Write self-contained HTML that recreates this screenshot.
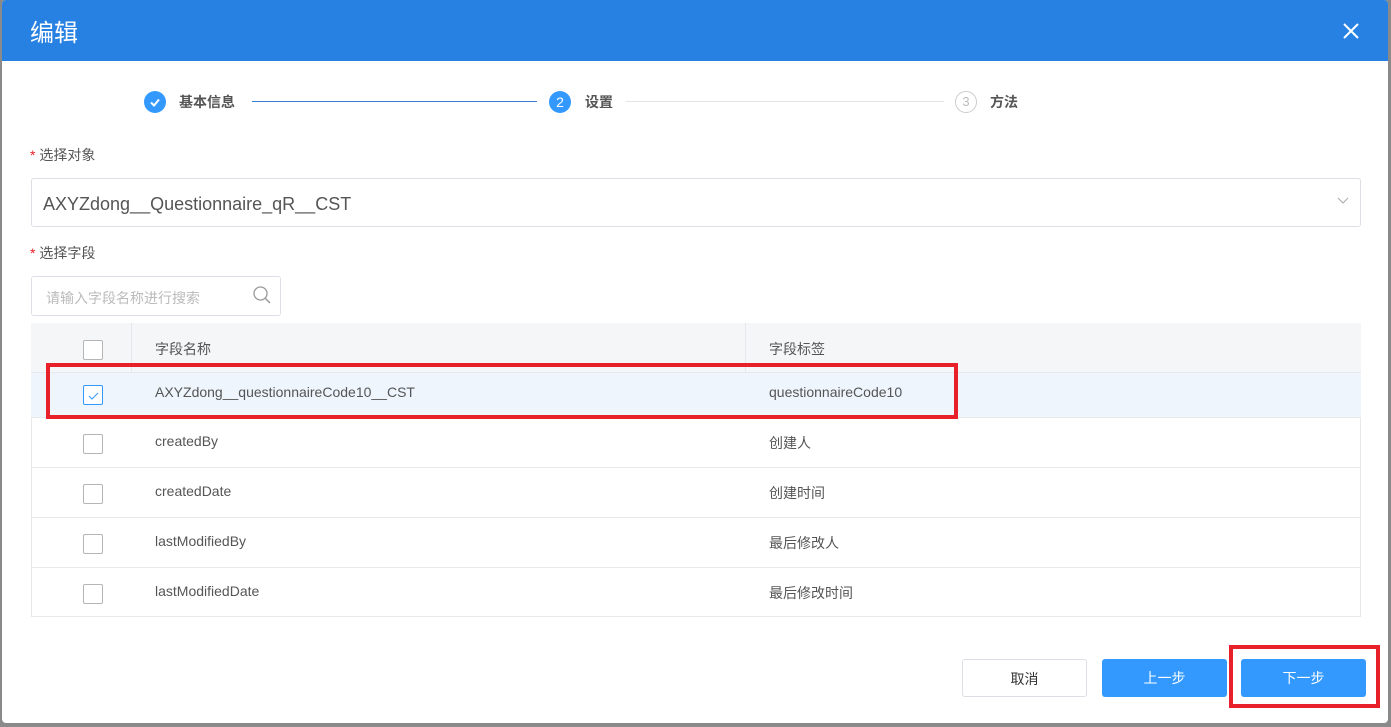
<!DOCTYPE html>
<html><head><meta charset="utf-8"><style>
*{margin:0;padding:0;box-sizing:border-box}
body{width:1391px;height:727px;background:#8a8a8a;position:relative;overflow:hidden;font-family:"Liberation Sans","Noto Sans CJK SC",sans-serif;color:#555}
.modal{position:absolute;left:2px;top:0;width:1386px;height:723px;background:#fff;border-radius:4px;overflow:hidden}
.hd{height:61px;background:#2781e2;color:#fff;font-size:24px;padding:13px 0 0 28px}
.abs{position:absolute}
.chk{position:absolute;width:20px;height:20px;border:1px solid #b5b5b5;border-radius:2px;background:#fff}
.row{position:absolute;left:29px;width:1330px;border-bottom:1px solid #e6e8eb;font-size:14px;color:#555}
.btn{position:absolute;top:659px;width:125px;height:38px;border-radius:3px;font-size:14px;text-align:center;line-height:38px}
.red{position:absolute;border:4px solid #e8202a}
</style></head><body>
<div class="modal">
<div class="hd">编辑</div>
<svg class="abs" style="left:1340px;top:22px" width="18" height="18"><path d="M2 2L16 16M16 2L2 16" stroke="#fff" stroke-width="2"/></svg>
<div class="abs" style="left:142px;top:91px;width:22px;height:22px;border-radius:50%;background:#3399ff"></div>
<svg class="abs" style="left:142px;top:91px" width="22" height="22"><path d="M7 11.5l3 3 5-6" stroke="#fff" stroke-width="2" fill="none"/></svg>
<div class="abs" style="left:177px;top:92px;font-size:14px;font-weight:bold;color:#555">基本信息</div>
<div class="abs" style="left:250px;top:101px;width:285px;height:1px;background:#3a7fd6"></div>
<div class="abs" style="left:547px;top:91px;width:22px;height:22px;border-radius:50%;background:#3399ff;color:#fff;font-size:14px;text-align:center;line-height:22px">2</div>
<div class="abs" style="left:583px;top:92px;font-size:14px;font-weight:bold;color:#555">设置</div>
<div class="abs" style="left:624px;top:101px;width:318px;height:1px;background:#e4e4e4"></div>
<div class="abs" style="left:953px;top:91px;width:22px;height:22px;border-radius:50%;border:1px solid #ccc;color:#bbb;font-size:13px;text-align:center;line-height:20px">3</div>
<div class="abs" style="left:988px;top:92px;font-size:14px;font-weight:bold;color:#555">方法</div>
<div class="abs" style="left:28px;top:145px;font-size:14px;color:#555"><span style="color:#e8202a">*</span> 选择对象</div>
<div class="abs" style="left:29px;top:178px;width:1330px;height:49px;border:1px solid #dcdfe6;border-radius:3px;font-size:18px;color:#555;padding:15px 0 0 11px">AXYZdong__Questionnaire_qR__CST</div>
<svg class="abs" style="left:1335px;top:197px" width="12" height="8"><path d="M1 1l5 5 5-5" stroke="#aaa" fill="none"/></svg>
<div class="abs" style="left:28px;top:243px;font-size:14px;color:#555"><span style="color:#e8202a">*</span> 选择字段</div>
<div class="abs" style="left:29px;top:276px;width:250px;height:40px;border:1px solid #dcdfe6;border-radius:3px;font-size:14px;color:#bbb;padding:11px 0 0 14px">请输入字段名称进行搜索</div>
<svg class="abs" style="left:250px;top:285px" width="20" height="20"><circle cx="8.5" cy="8.5" r="6.5" stroke="#999" stroke-width="1.3" fill="none"/><path d="M13.5 13.5L18 18" stroke="#999" stroke-width="1.5"/></svg>
<div class="abs" style="left:29px;top:323px;width:1330px;height:294px;border:1px solid #e6e8eb"></div>
<div class="row" style="top:323px;height:50px;background:#f5f6f8">
<div class="abs" style="left:100px;top:0;width:1px;height:49px;background:#e6e8eb"></div>
<div class="abs" style="left:714px;top:0;width:1px;height:49px;background:#e6e8eb"></div>
<div class="chk" style="left:52px;top:17px"></div>
<div class="abs" style="left:124px;top:16px">字段名称</div><div class="abs" style="left:738px;top:16px">字段标签</div></div>
<div class="row" style="top:373px;height:45px;background:#eef5fd">
<div class="chk" style="left:52px;top:12px;border-color:#3399ff"></div>
<svg class="abs" style="left:57px;top:18px" width="12" height="10"><path d="M1 5l3 3 6-6" stroke="#3399ff" fill="none"/></svg>
<div class="abs" style="left:124px;top:11px">AXYZdong__questionnaireCode10__CST</div><div class="abs" style="left:738px;top:11px">questionnaireCode10</div></div>
<div class="row" style="top:418px;height:50px"><div class="chk" style="left:52px;top:16px"></div><div class="abs" style="left:124px;top:15px">createdBy</div><div class="abs" style="left:738px;top:15px">创建人</div></div>
<div class="row" style="top:468px;height:50px"><div class="chk" style="left:52px;top:16px"></div><div class="abs" style="left:124px;top:15px">createdDate</div><div class="abs" style="left:738px;top:15px">创建时间</div></div>
<div class="row" style="top:518px;height:50px"><div class="chk" style="left:52px;top:16px"></div><div class="abs" style="left:124px;top:15px">lastModifiedBy</div><div class="abs" style="left:738px;top:15px">最后修改人</div></div>
<div class="row" style="top:568px;height:49px"><div class="chk" style="left:52px;top:16px"></div><div class="abs" style="left:124px;top:15px">lastModifiedDate</div><div class="abs" style="left:738px;top:15px">最后修改时间</div></div>
<div class="red" style="left:44px;top:363px;width:912px;height:56px"></div>
<div class="btn" style="left:960px;border:1px solid #dcdfe6;color:#333">取消</div>
<div class="btn" style="left:1100px;background:#3399ff;color:#fff">上一步</div>
<div class="btn" style="left:1239px;background:#3399ff;color:#fff">下一步</div>
<div class="red" style="left:1227px;top:645px;width:151px;height:63px"></div>
</div>
</body></html>
